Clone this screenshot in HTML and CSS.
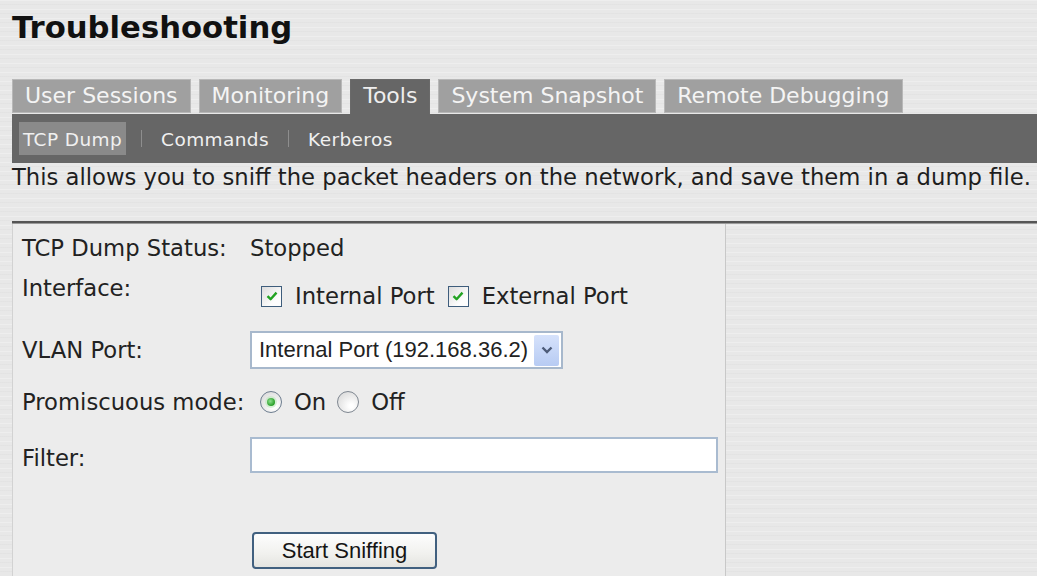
FILE: index.html
```html
<!DOCTYPE html>
<html lang="en">
<head>
<meta charset="utf-8">
<title>Troubleshooting</title>
<link rel="stylesheet" href="styles.css">
</head>
<body>
<div class="page">
  <h1 class="title">Troubleshooting</h1>

  <nav class="tabs">
    <a class="tab">User Sessions</a>
    <a class="tab">Monitoring</a>
    <a class="tab tab-active">Tools</a>
    <a class="tab">System Snapshot</a>
    <a class="tab">Remote Debugging</a>
  </nav>

  <div class="subbar">
    <a class="subtab subtab-active">TCP Dump</a>
    <span class="subsep"></span>
    <a class="subtab">Commands</a>
    <span class="subsep"></span>
    <a class="subtab">Kerberos</a>
  </div>

  <p class="intro">This allows you to sniff the packet headers on the network, and save them in a dump file.</p>

  <div class="rule"></div>

  <form class="panel">
    <div class="lbl row1">TCP Dump Status:</div>
    <div class="val row1">Stopped</div>

    <div class="lbl lbl-top">Interface:</div>
    <div class="val choices">
      <label class="choice">
        <span class="check">
          <svg viewBox="0 0 14 14" width="14" height="14"><path d="M2.5 7.2 L5.6 10.2 L11.5 3.6" fill="none" stroke="#23a323" stroke-width="2.4" stroke-linejoin="round"/></svg>
        </span>
        <span>Internal Port</span>
      </label>
      <label class="choice">
        <span class="check">
          <svg viewBox="0 0 14 14" width="14" height="14"><path d="M2.5 7.2 L5.6 10.2 L11.5 3.6" fill="none" stroke="#23a323" stroke-width="2.4" stroke-linejoin="round"/></svg>
        </span>
        <span>External Port</span>
      </label>
    </div>

    <div class="lbl">VLAN Port:</div>
    <div class="val">
      <div class="select">
        <span class="select-text">Internal Port (192.168.36.2)</span>
        <span class="select-btn">
          <svg viewBox="0 0 12 8" width="12" height="8"><path d="M1.5 1.5 L6 6 L10.5 1.5" fill="none" stroke="#4d5b78" stroke-width="2.4"/></svg>
        </span>
      </div>
    </div>

    <div class="lbl">Promiscuous mode:</div>
    <div class="val choices">
      <label class="choice choice-radio">
        <span class="radio radio-on"><span class="dot"></span></span>
        <span>On</span>
      </label>
      <label class="choice choice-radio">
        <span class="radio"></span>
        <span>Off</span>
      </label>
    </div>

    <div class="lbl">Filter:</div>
    <div class="val val-top">
      <input class="field" type="text">
    </div>

    <div class="lbl"></div>
    <div class="val val-btn">
      <button type="button" class="btn">Start Sniffing</button>
    </div>
  </form>
</div>
</body>
</html>
```

FILE: styles.css
```css
html, body {
  margin: 0;
  padding: 0;
}

body {
  background-color: #e8e8e8;
  background-image:
    repeating-linear-gradient(180deg,
      rgba(255, 255, 255, 0.28) 0 1px,
      transparent 1px 4px,
      rgba(0, 0, 0, 0.018) 4px 5px,
      transparent 5px 9px);
  font-family: "DejaVu Sans", Verdana, sans-serif;
  color: #222;
  width: 1037px;
  height: 576px;
  overflow: hidden;
}

.page {
  padding-left: 12px;
}

/* heading */
.title {
  margin: 10px 0 0;
  font-size: 30.7px;
  line-height: 36px;
  font-weight: bold;
  color: #111;
}

/* main tabs */
.tabs {
  display: flex;
  align-items: flex-start;
  gap: 8px;
  margin-top: 33px;
  height: 35px;
}

.tab {
  display: block;
  height: 32px;
  line-height: 32px;
  padding: 0 12px;
  background: #a0a0a0;
  border: 1px solid #b8b8b8;
  color: #f4f4f4;
  font-size: 22px;
  white-space: nowrap;
}

.tab-active {
  height: 34px;
  background: #666;
  border-color: #6a6a6a;
  border-bottom: none;
  color: #eee;
}

/* sub navigation */
.subbar {
  display: flex;
  align-items: center;
  height: 49px;
  background: #666;
  padding-left: 7px;
}

.subtab {
  display: block;
  height: 33px;
  line-height: 35px;
  padding: 0 4px;
  color: #f0f0f0;
  font-size: 18.5px;
  letter-spacing: 0.4px;
}

.subtab-active {
  background: #8a8a8a;
}

.subsep {
  width: 1px;
  height: 17px;
  margin: 0 15px;
  background: #8e8e8e;
}

/* description */
.intro {
  margin: 1px 0 0;
  font-size: 22.7px;
  line-height: 26px;
  color: #1e1e1e;
  white-space: nowrap;
}

.rule {
  margin-top: 31px;
  height: 2px;
  background: #555;
  border-bottom: 1px solid #9a9a9a;
}

/* form panel */
.panel {
  width: 714px;
  height: 360px;
  box-sizing: border-box;
  background: #ececec;
  border-left: 1px solid #d2d2d2;
  border-right: 1px solid #c8c8c8;
  padding: 4px 0 0 9px;
  display: grid;
  grid-template-columns: 228px 1fr;
  grid-template-rows: 40px 56px 52px 52px 60px auto;
  font-size: 22.7px;
  line-height: 26px;
}

.lbl {
  align-self: center;
  white-space: nowrap;
}

.lbl-top {
  align-self: start;
  padding-top: 7px;
}

.val {
  align-self: center;
  white-space: nowrap;
}

.val-top {
  align-self: start;
  padding-top: 9px;
}

.val-btn {
  align-self: start;
  padding-top: 44px;
}

.choices {
  display: flex;
  align-items: center;
}

.choice {
  display: flex;
  align-items: center;
  gap: 13px;
  margin-left: 11px;
  margin-right: 2px;
}

.choice-radio {
  margin-left: 10px;
  margin-right: 1px;
  gap: 12px;
}

.check {
  width: 19px;
  height: 19px;
  border: 1px solid #3e5d7c;
  background: linear-gradient(135deg, #dcdcdc, #fdfdfd 70%);
  display: flex;
  align-items: center;
  justify-content: center;
}

.radio {
  width: 20px;
  height: 20px;
  border-radius: 50%;
  border: 1px solid #7f8791;
  background: radial-gradient(circle at 65% 70%, #fff 10%, #d8d8d8 90%);
  display: flex;
  align-items: center;
  justify-content: center;
}

.radio-on {
  border-color: #6d7d8f;
}

.dot {
  width: 8px;
  height: 8px;
  border-radius: 50%;
  background: radial-gradient(circle at 40% 40%, #8fe08f, #1f9a1f 75%);
  box-shadow: 0 0 0 2px rgba(190, 230, 190, 0.6);
}

/* drop-down */
.select {
  display: flex;
  align-items: center;
  width: 309px;
  height: 34px;
  background: #fff;
  border: 2px solid #a7b8cc;
  font-family: "Liberation Sans", Arial, sans-serif;
  font-size: 22px;
  color: #222;
}

.select-text {
  flex: 1;
  padding-left: 7px;
}

.select-btn {
  width: 25px;
  height: 31px;
  margin-right: 2px;
  background: linear-gradient(180deg, #d6e2fb, #b7cbf3);
  border-radius: 2px;
  display: flex;
  align-items: center;
  justify-content: center;
}

/* text field */
.field {
  display: block;
  box-sizing: border-box;
  width: 468px;
  height: 36px;
  margin: 0;
  border: 2px solid #a9bbd0;
  background: #fff;
  font-size: 20px;
}

/* action button */
.btn {
  display: block;
  box-sizing: border-box;
  width: 185px;
  height: 37px;
  margin-left: 2px;
  border: 2px solid #41607f;
  border-radius: 4px;
  background: linear-gradient(180deg, #fdfdfd, #f1f1ee 60%, #e4e4e0);
  font-family: "Liberation Sans", Arial, sans-serif;
  font-size: 22px;
  color: #151515;
  padding: 0;
}
```
